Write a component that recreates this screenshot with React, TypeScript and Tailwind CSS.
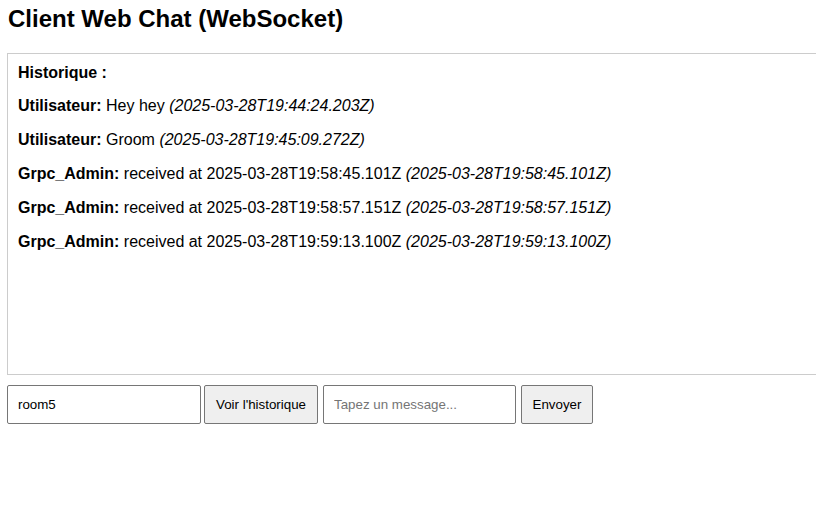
import React from "react";

const messages = [
  { user: "Utilisateur", text: "Hey hey", ts: "2025-03-28T19:44:24.203Z" },
  { user: "Utilisateur", text: "Groom", ts: "2025-03-28T19:45:09.272Z" },
  { user: "Grpc_Admin", text: "received at 2025-03-28T19:58:45.101Z", ts: "2025-03-28T19:58:45.101Z" },
  { user: "Grpc_Admin", text: "received at 2025-03-28T19:58:57.151Z", ts: "2025-03-28T19:58:57.151Z" },
  { user: "Grpc_Admin", text: "received at 2025-03-28T19:59:13.100Z", ts: "2025-03-28T19:59:13.100Z" },
];

export default function App() {
  return (
    <div
      className="w-[816px] h-[521px] overflow-hidden bg-white text-black"
      style={{ fontFamily: '"Liberation Sans", Arial, sans-serif' }}
    >
      <div className="pl-[7px] pt-[5px]">
        <h2 className="pl-[1px] text-[24px] font-bold leading-[27.6px] mb-[20px]">
          Client Web Chat (WebSocket)
        </h2>
        <div className="w-[840px] h-[322px] border border-[#cccccc] px-[10px] pt-[10px] text-[16px] leading-[17.8px]">
          <div className="font-bold">Historique :</div>
          {messages.map((m, i) => (
            <p key={i} className="mt-[16px]">
              <strong>{m.user}:</strong> {m.text} <em>({m.ts})</em>
            </p>
          ))}
        </div>
        <div className="flex mt-[10px] text-[13.333px]">
          <input
            defaultValue="room5"
            className="w-[194px] h-[39px] border border-[#767676] rounded-[2px] px-[10px] text-black outline-none"
          />
          <button className="ml-[3px] w-[114px] h-[39px] border border-[#767676] rounded-[2px] bg-[#efefef] px-[10px] pt-[1px] text-black">
            Voir l'historique
          </button>
          <input
            placeholder="Tapez un message..."
            className="ml-[5px] w-[193px] h-[39px] border border-[#767676] rounded-[2px] px-[10px] text-black placeholder:text-[#757575] outline-none"
          />
          <button className="ml-[5px] w-[72px] h-[39px] border border-[#767676] rounded-[2px] bg-[#efefef] px-[10px] pt-[1px] text-black">
            Envoyer
          </button>
        </div>
      </div>
    </div>
  );
}
